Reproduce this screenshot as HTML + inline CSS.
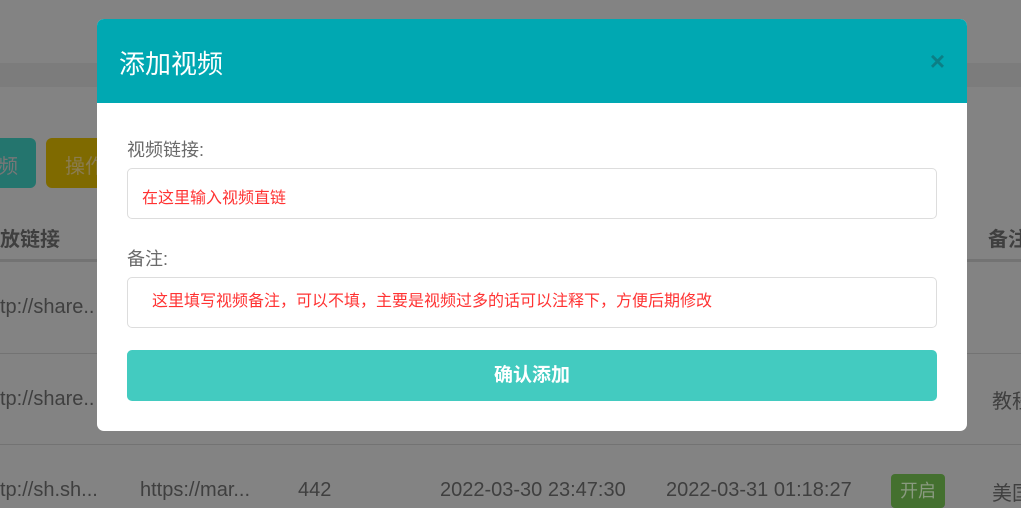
<!DOCTYPE html>
<html><head><meta charset="utf-8"><style>
*{margin:0;padding:0;box-sizing:border-box}
body{width:1021px;height:506px;overflow:hidden;background:#838383;font-family:"Liberation Sans","Noto Sans CJK SC",sans-serif;position:relative}
.a{position:absolute;white-space:nowrap}
.bg{color:#3f3f3f;font-size:20px}
.m{position:absolute;left:97px;top:19px;width:870px;height:412px;background:#fff;border-radius:7px;overflow:hidden}
.h{height:84px;background:#00a8b2;color:#fff;font-size:26px;padding:25px 0 0 22px}
.x{position:absolute;right:22px;top:27px;color:#0b7f86;font-size:26px;font-weight:bold}
.l{position:absolute;left:30px;font-size:18px;color:#6a6a6a}
.i{position:absolute;left:30px;width:810px;height:51px;border:1px solid #ddd;border-radius:5px;color:#f33;font-size:16px;padding:15px 0 0 14px}
.b{position:absolute;left:30px;top:331px;width:810px;height:51px;background:#43cbc0;border-radius:5px;color:#fff;font-size:19px;font-weight:bold;text-align:center;line-height:51px}
</style></head><body>
<div class="a" style="left:0;top:63px;width:1021px;height:24px;background:#7c7c7c"></div>
<div class="a" style="left:-10px;top:138px;width:46px;height:50px;background:#24756e;border-radius:6px;color:#777;font-size:20px;padding:12px 0 0 8px">频</div>
<div class="a" style="left:46px;top:138px;width:70px;height:50px;background:#7f6a00;border-radius:6px;color:#8a7c50;font-size:20px;padding:12px 0 0 19px">操作</div>
<div class="a bg" style="left:0;top:223px;font-weight:bold">放链接</div>
<div class="a bg" style="left:988px;top:223px;font-weight:bold">备注</div>
<div class="a" style="left:0;top:259px;width:1021px;height:3px;background:#737373"></div>
<div class="a" style="left:0;top:353px;width:1021px;height:1px;background:#737373"></div>
<div class="a" style="left:0;top:444px;width:1021px;height:1px;background:#737373"></div>
<div class="a bg" style="left:0;top:296px">tp://share..</div>
<div class="a bg" style="left:0;top:388px">tp://share..</div>
<div class="a bg" style="left:992px;top:385px">教程</div>
<div class="a bg" style="left:0;top:479px">tp://sh.sh...</div>
<div class="a bg" style="left:140px;top:479px">https://mar...</div>
<div class="a bg" style="left:298px;top:479px">442</div>
<div class="a bg" style="left:440px;top:479px">2022-03-30 23:47:30</div>
<div class="a bg" style="left:666px;top:479px">2022-03-31 01:18:27</div>
<div class="a" style="left:891px;top:474px;width:54px;height:34px;background:#44702f;border-radius:4px;color:#8a9a80;font-size:18px;text-align:center;line-height:34px">开启</div>
<div class="a bg" style="left:992px;top:477px">美国</div>
<div class="m">
<div class="h">添加视频</div>
<div class="x">×</div>
<div class="l" style="top:117px">视频链接:</div>
<div class="i" style="top:149px">在这里输入视频直链</div>
<div class="l" style="top:226px">备注:</div>
<div class="i" style="top:258px;padding-left:24px;padding-top:9px">这里填写视频备注，可以不填，主要是视频过多的话可以注释下，方便后期修改</div>
<div class="b">确认添加</div>
</div>
</body></html>
